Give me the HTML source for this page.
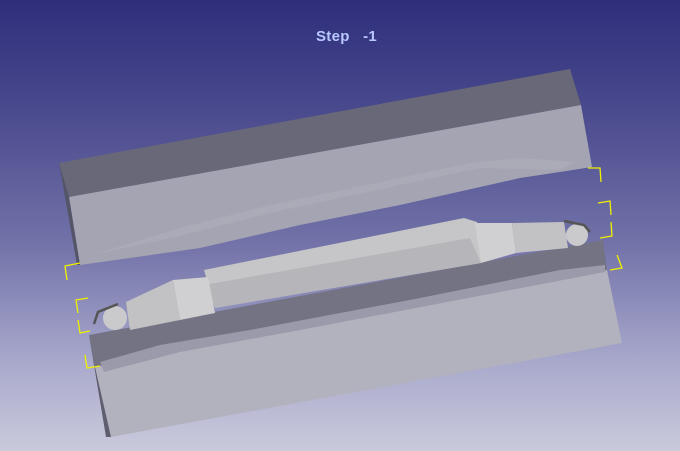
<!DOCTYPE html>
<html><head><style>
html,body{margin:0;padding:0}
body{width:680px;height:451px;overflow:hidden;background:linear-gradient(180deg,#2e2e7c 0%,#4a4a8e 25%,#7474aa 55%,#a8a8cc 80%,#cacadc 100%);position:relative;font-family:"Liberation Sans",sans-serif}
.t{position:absolute;left:316px;top:28px;color:#b8c8ff;font-weight:bold;font-size:15px;white-space:pre;letter-spacing:0.3px}
svg{position:absolute;left:0;top:0}
</style></head><body>
<div class="t">Step   -1</div>
<svg width="680" height="451">
<polygon points="59,163 570,69 581,105 69,197" fill="#686878"/>
<polygon points="69,197 581,105 592,167 560,172 520,178 400,205 300,225 200,248 130,258 80,265" fill="#a4a4b2"/>
<polygon points="59,163 69,197 80,265 77,265" fill="#55556a"/>
<path d="M92,255 L180,228 L270,205 L400,178 L470,163 L520,158 L575,162 L560,170 L480,168 L400,185 L270,213 L180,236 Z" fill="#b0b0bc" opacity="0.6"/>
<polygon points="89,335 603,240 607,270 95,367" fill="#737384"/>
<polygon points="95,367 607,270 622,343 111,437" fill="#b2b2be"/>
<polygon points="89,335 95,367 111,437 106,437" fill="#5e5e70"/>
<path d="M100,362 L160,345 L250,330 L420,298 L560,270 L605,265 L605,272 L500,292 L300,330 L180,352 L104,372 Z" fill="#9a9aaa"/>
<polygon points="204,270 464,218 477,222 481,263 215,308" fill="#c6c6c8"/>
<polygon points="204,285 470,238 481,263 215,308" fill="#b6b6ba"/>
<polygon points="173,280 208,277 215,313 180,320" fill="#d0d0d2"/>
<polygon points="475,223 512,223 516,253 481,263" fill="#d0d0d2"/>
<polygon points="173,280 126,302 130,330 180,320" fill="#c2c2c4"/>
<polygon points="512,223 564,222 568,248 516,253" fill="#c2c2c4"/>
<circle cx="115" cy="318" r="12" fill="#cacacc"/>
<circle cx="577" cy="235" r="11" fill="#cacacc"/>
<polyline points="94,324 98,312 118,304" fill="none" stroke="#555" stroke-width="2.5"/>
<polyline points="564,221 584,225 590,232" fill="none" stroke="#555" stroke-width="2.5"/>
<g stroke="#f0f000" stroke-width="1.3" fill="none">
<polyline points="80,263 65,266 67,280"/>
<polyline points="88,298 76,300 78,313"/>
<polyline points="78,320 80,333 90,331"/>
<polyline points="85,355 87,368 100,366"/>
<polyline points="588,168 600,168 601,182"/>
<polyline points="598,203 610,201 611,215"/>
<polyline points="611,222 612,236 600,238"/>
<polyline points="617,255 622,268 610,270"/>
</g>
</svg>
</body></html>
